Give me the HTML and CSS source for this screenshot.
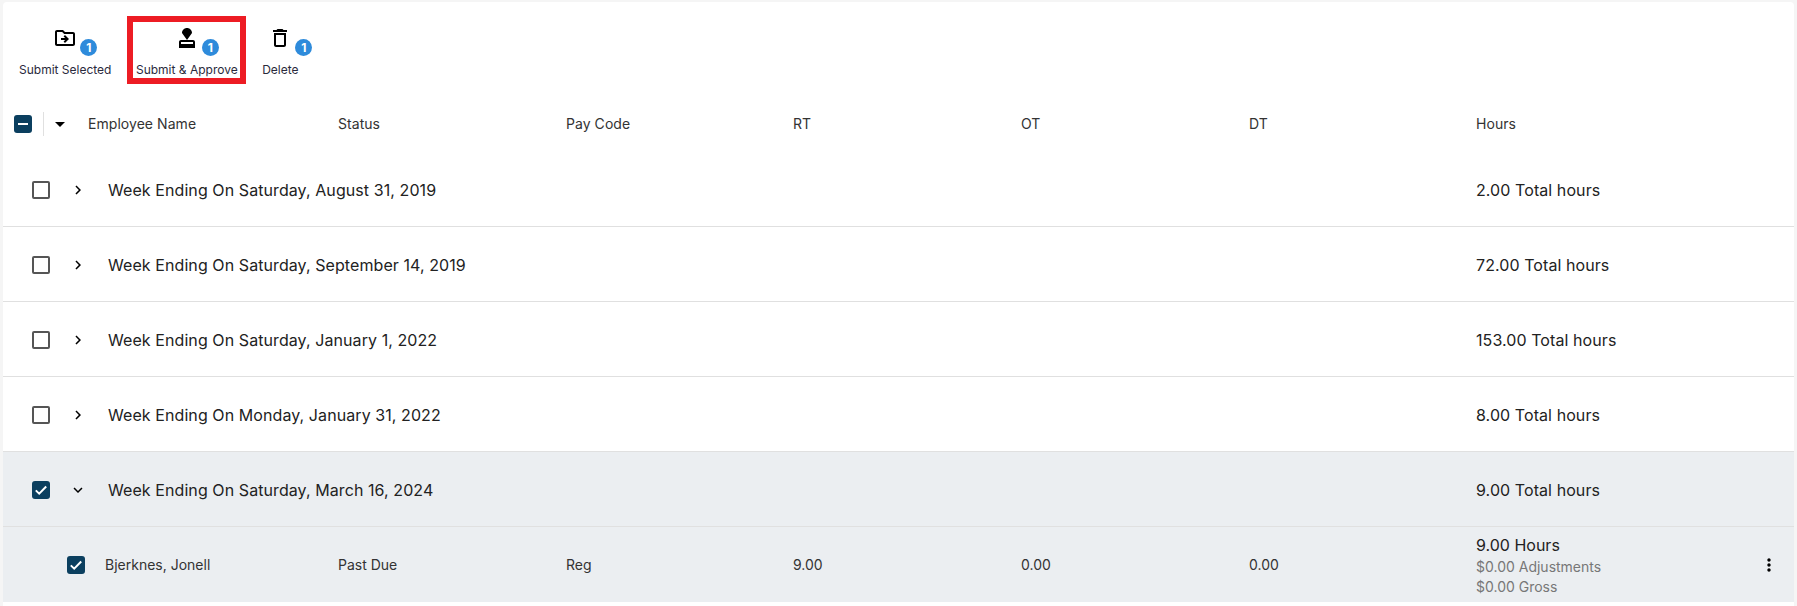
FILE: index.html
```html
<!DOCTYPE html>
<html>
<head lang="en">
    <meta charset="UTF-8">
    <title>Timesheets</title>
    <link rel="stylesheet" href="styles.css">
</head>
<body>
<div class="card">
    <div class="toolbar">
        <div class="tool">
            <span class="tool_icon">
                <svg viewBox="0 0 24 24" width="24" height="24"><path d="M20 6h-8l-2-2H4c-1.11 0-1.99.89-1.99 2L2 18c0 1.11.89 2 2 2h16c1.11 0 2-.89 2-2V8c0-1.11-.89-2-2-2zm0 12H4V6h5.17l2 2H20v10zm-8.01-9l-1.41 1.41L12.16 12H8v2h4.16l-1.59 1.59L11.99 17 16 13.01 11.99 9z"/></svg>
                <span class="badge">1</span>
            </span>
            <span class="tool_label">Submit Selected</span>
        </div>
        <div class="tool marked">
            <span class="tool_icon">
                <svg viewBox="0 0 24 24" width="24" height="24"><path d="M4 16v6h16v-6c0-1.1-.9-2-2-2H6c-1.1 0-2 .9-2 2zm14 2H6v-2h12v2zM12 2C9.24 2 7 4.24 7 7l5 7 5-7c0-2.76-2.24-5-5-5z"/></svg>
                <span class="badge">1</span>
            </span>
            <span class="tool_label">Submit &amp; Approve</span>
        </div>
        <div class="tool">
            <span class="tool_icon">
                <svg viewBox="0 0 24 24" width="24" height="24"><path d="M6 19c0 1.1.9 2 2 2h8c1.1 0 2-.9 2-2V7H6v12zM8 9h8v10H8V9zm7.5-5l-1-1h-5l-1 1H5v2h14V4z"/></svg>
                <span class="badge">1</span>
            </span>
            <span class="tool_label">Delete</span>
        </div>
    </div>

    <div class="head_row">
        <div class="head_select">
            <span class="check checked"><span class="dash"></span></span>
            <span class="divider"></span>
            <span class="caret"></span>
        </div>
        <div class="cols head_cols">
            <div>Employee Name</div>
            <div>Status</div>
            <div>Pay Code</div>
            <div>RT</div>
            <div>OT</div>
            <div>DT</div>
            <div>Hours</div>
        </div>
    </div>

    <div class="group">
        <span class="check"></span>
        <svg class="chevron" viewBox="0 0 24 24" width="18" height="18"><path d="M8.59 16.59L13.17 12 8.59 7.41 10 6l6 6-6 6z"/></svg>
        <span class="group_name">Week Ending On Saturday, August 31, 2019</span>
        <span class="group_total">2.00 Total hours</span>
    </div>
    <div class="group">
        <span class="check"></span>
        <svg class="chevron" viewBox="0 0 24 24" width="18" height="18"><path d="M8.59 16.59L13.17 12 8.59 7.41 10 6l6 6-6 6z"/></svg>
        <span class="group_name">Week Ending On Saturday, September 14, 2019</span>
        <span class="group_total">72.00 Total hours</span>
    </div>
    <div class="group">
        <span class="check"></span>
        <svg class="chevron" viewBox="0 0 24 24" width="18" height="18"><path d="M8.59 16.59L13.17 12 8.59 7.41 10 6l6 6-6 6z"/></svg>
        <span class="group_name">Week Ending On Saturday, January 1, 2022</span>
        <span class="group_total">153.00 Total hours</span>
    </div>
    <div class="group">
        <span class="check"></span>
        <svg class="chevron" viewBox="0 0 24 24" width="18" height="18"><path d="M8.59 16.59L13.17 12 8.59 7.41 10 6l6 6-6 6z"/></svg>
        <span class="group_name">Week Ending On Monday, January 31, 2022</span>
        <span class="group_total">8.00 Total hours</span>
    </div>
    <div class="group selected">
        <span class="check checked">
            <svg viewBox="0 0 18 18" width="18" height="18"><path d="M3.8 9.4l3.4 3.3 7-7.2" fill="none" stroke="#fff" stroke-width="2"/></svg>
        </span>
        <svg class="chevron" viewBox="0 0 24 24" width="18" height="18"><path d="M7.41 8.59L12 13.17l4.59-4.58L18 10l-6 6-6-6z"/></svg>
        <span class="group_name">Week Ending On Saturday, March 16, 2024</span>
        <span class="group_total">9.00 Total hours</span>
    </div>

    <div class="entry selected">
        <div class="entry_select">
            <span class="check checked">
                <svg viewBox="0 0 18 18" width="18" height="18"><path d="M3.8 9.4l3.4 3.3 7-7.2" fill="none" stroke="#fff" stroke-width="2"/></svg>
            </span>
        </div>
        <div class="cols entry_cols">
            <div>Bjerknes, Jonell</div>
            <div>Past Due</div>
            <div>Reg</div>
            <div>9.00</div>
            <div>0.00</div>
            <div>0.00</div>
            <div class="hours">
                <div class="hours_main">9.00 Hours</div>
                <div class="hours_sub">$0.00 Adjustments</div>
                <div class="hours_sub">$0.00 Gross</div>
            </div>
        </div>
        <svg class="more" viewBox="0 0 24 24" width="20" height="20"><path d="M12 8c1.1 0 2-.9 2-2s-.9-2-2-2-2 .9-2 2 .9 2 2 2zm0 2c-1.1 0-2 .9-2 2s.9 2 2 2 2-.9 2-2-.9-2-2-2zm0 6c-1.1 0-2 .9-2 2s.9 2 2 2 2-.9 2-2-.9-2-2-2z"/></svg>
    </div>
</div>
</body>
</html>
```

FILE: styles.css
```css
html, body {
    height: 100%;
}
body {
    margin: 0;
    padding: 2px 3px 0 3px;
    box-sizing: border-box;
    background: #f5f5f5;
    font-family: Inter, "Noto Sans", sans-serif;
    color: #212529;
    overflow: hidden;
}
.card {
    background: #fff;
    height: 604px;
    box-sizing: border-box;
    border-radius: 4px 4px 0 0;
}
.toolbar {
    display: flex;
    gap: 19.5px;
    padding: 20px 0 0 13.5px;
    height: 86px;
    box-sizing: border-box;
}
.tool {
    display: flex;
    flex-direction: column;
    align-items: center;
    height: 56px;
    padding: 0 2.5px;
    box-sizing: border-box;
}
.tool.marked {
    outline: 6px solid #ed1c24;
}
.tool_icon {
    position: relative;
    display: block;
    width: 24px;
    height: 24px;
    margin-top: 4px;
}
.tool_icon svg {
    display: block;
}
.badge {
    position: absolute;
    left: 27px;
    top: 13px;
    width: 17px;
    height: 17px;
    line-height: 17px;
    border-radius: 50%;
    background: #2e8bdb;
    color: #fff;
    font-size: 12px;
    font-weight: 700;
    text-align: center;
}
.tool_label {
    margin-top: 12px;
    font-size: 12px;
    line-height: 16px;
    white-space: nowrap;
    color: #2a2a3c;
}
.head_row {
    display: flex;
    align-items: center;
    height: 64px;
    padding-left: 11px;
    padding-top: 8px;
    box-sizing: border-box;
}
.head_select {
    display: flex;
    align-items: center;
    width: 74px;
    flex: none;
}
.divider {
    width: 1px;
    height: 24px;
    margin-left: 11px;
    background: #e0e0e0;
}
.caret {
    width: 0;
    height: 0;
    margin-left: 11px;
    border-left: 5px solid transparent;
    border-right: 5px solid transparent;
    border-top: 5px solid #000;
}
.cols {
    flex: 1;
    display: grid;
    grid-template-columns: 250px 228px 227px 228px 228px 227px 1fr;
    align-items: center;
    font-size: 14px;
    color: #333;
}
.head_cols {
    margin-top: -2px;
    letter-spacing: .05px;
}
.check {
    display: block;
    flex: none;
    width: 18px;
    height: 18px;
    box-sizing: border-box;
    border: 2px solid #555;
    border-radius: 2px;
}
.check.checked {
    background: #0b3f5f;
    border: 0;
    border-radius: 3px;
    display: flex;
    align-items: center;
    justify-content: center;
}
.dash {
    width: 10px;
    height: 2px;
    background: #fff;
}
.group {
    display: flex;
    align-items: center;
    height: 75px;
    padding-left: 29px;
    padding-top: 2px;
    box-sizing: border-box;
    border-bottom: 1px solid #e0e0e0;
    font-size: 16px;
    letter-spacing: .08px;
    color: #222;
}
.chevron {
    flex: none;
    margin-left: 19px;
}
.group_name {
    margin-left: 21px;
    width: 1368px;
    flex: none;
}
.group_total {
    white-space: nowrap;
}
.selected {
    background: #ebeef1;
}
.entry {
    display: flex;
    align-items: center;
    height: 75px;
}
.entry_select {
    width: 102px;
    flex: none;
    padding-left: 64px;
    box-sizing: border-box;
}
.entry_cols {
    grid-template-columns: 233px 228px 227px 228px 228px 227px 1fr;
}
.hours_main {
    font-size: 16px;
    line-height: 24px;
    color: #222;
}
.hours_sub {
    font-size: 14px;
    line-height: 20px;
    color: #777;
}
.more {
    flex: none;
    margin-right: 15px;
}
```
